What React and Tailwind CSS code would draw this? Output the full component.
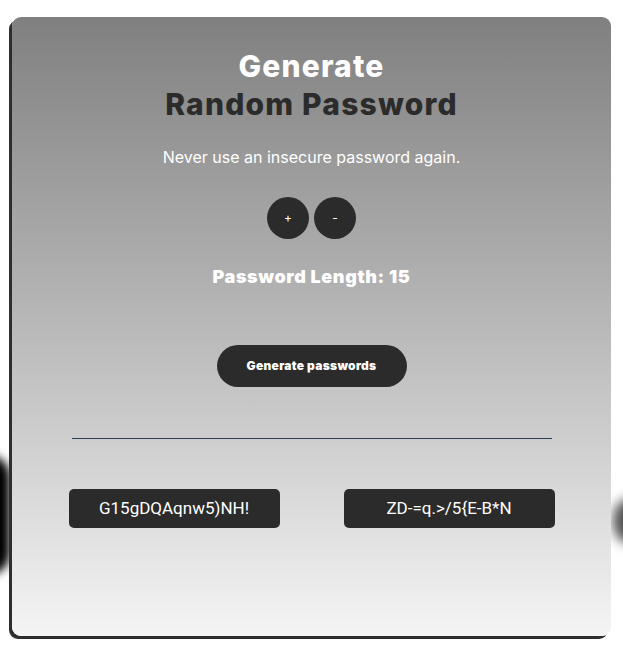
import React, { useState } from 'react';

const App = () => {
  const [length, setLength] = useState(15);
  const passwords = ['G15gDQAqnw5)NH!', 'ZD-=q.>/5{E-B*N'];

  return (
    <div className="relative min-h-[662px] w-full overflow-hidden bg-white" style={{ fontFamily: 'Inter, "Noto Sans", sans-serif' }}>
      {/* blurred shapes behind the card */}
      <div className="absolute left-[-34px] top-[455px] h-[120px] w-[44px] rounded-full bg-black blur-[5px]" />
      <div className="absolute right-[-30px] top-[498px] h-[46px] w-[40px] rounded-full bg-neutral-600 blur-[6px]" />

      <div className="relative ml-[12px] mt-[17px] flex h-[619px] w-[599px] flex-col items-center rounded-[9px] bg-gradient-to-b from-[#808080] to-[#f5f5f5] shadow-[-3px_3px_0_#2e2e2e]">
        <h1 className="mt-[30px] text-center text-[30px] font-extrabold leading-[38px] tracking-[1.2px]">
          <span className="block text-white">Generate</span>
          <span className="block text-[#2b2b2b]">Random Password</span>
        </h1>
        <p className="mt-[22px] text-[16px] text-white">Never use an insecure password again.</p>

        <div className="mt-[28px] flex gap-[5px]">
          <button onClick={() => setLength(length + 1)} className="flex h-[42px] w-[42px] items-center justify-center rounded-full bg-[#2b2b2b] text-[12px] text-white">+</button>
          <button onClick={() => setLength(Math.max(1, length - 1))} className="flex h-[42px] w-[42px] items-center justify-center rounded-full bg-[#2b2b2b] text-[12px] text-white">-</button>
        </div>

        <p className="mt-[24px] text-[18px] font-black tracking-[0.6px] text-white">Password Length: {length}</p>

        <button className="mt-[55px] h-[42px] w-[190px] rounded-full bg-[#2b2b2b] text-[12px] font-black tracking-[0.3px] text-white">Generate passwords</button>

        <div className="mt-[51px] h-px w-[480px] bg-[#2c3e5a]" />

        <div className="mt-[50px] flex gap-[64px]">
          {passwords.map((p) => (
            <div key={p} className="flex h-[39px] w-[211px] items-center justify-center rounded-[5px] bg-[#2b2b2b] text-[17px] font-normal text-white" style={{ fontFamily: 'Roboto, "Liberation Sans", sans-serif' }}>{p}</div>
          ))}
        </div>
      </div>
    </div>
  );
};

export default App;
